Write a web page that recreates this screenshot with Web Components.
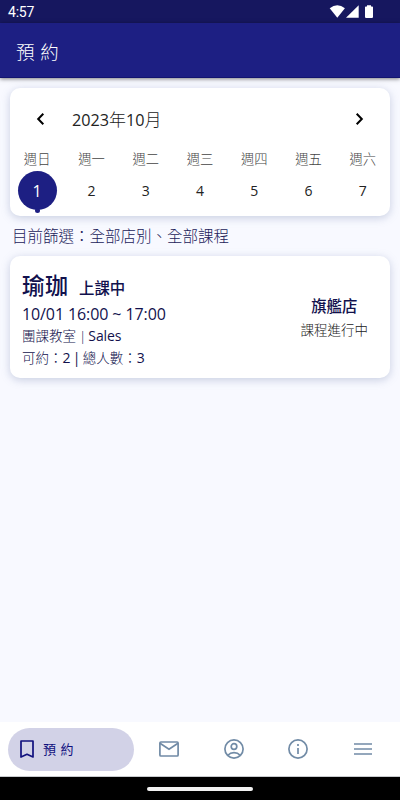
<!DOCTYPE html>
<html lang="zh-Hant">
<head>
<meta charset="utf-8">
<title>預約</title>
<style>
body{margin:0;font-family:"Open Sans","Noto Sans CJK TC",sans-serif;background:#f8f9ff}
</style>
</head>
<body>
<booking-app></booking-app>
<script>
const define=(name,html)=>customElements.define(name,class extends HTMLElement{
  constructor(){super();this.attachShadow({mode:'open'}).innerHTML=html;}
});

define('status-bar',`<style>
:host{display:flex;height:23px;background:#16175f;color:#fff;align-items:center;justify-content:space-between;padding:1px 26px 0 8px;box-sizing:border-box;font:400 14px/22px Roboto,sans-serif;letter-spacing:-.2px}
svg{display:block}
</style><span>4:57</span>
<svg width="46" height="14" viewBox="328 5 46 14" fill="#fff"><path d="M329.7 8.2Q337.3 2.300 344.900 8.2L337.300 17.800Z"/><path d="M358.700 5.200V17.800H346Z"/><path d="M367 5.200h4v1.200h1.200q.8 0 .8.8v9.900q0 .8-.8.8h-6.400q-.8 0-.8-.8V7.200q0-.8.8-.8H367z"/></svg>`);

define('title-bar',`<style>
:host{display:flex;height:55px;box-sizing:border-box;align-items:center;padding:1px 16px 0;background:#1d1f83;border-bottom:1px solid #12146f;color:#fff;font-size:18.500px;font-weight:300;word-spacing:.9px;position:relative;z-index:1;box-shadow:0 1px 4px rgba(0,0,0,.5)}
</style><slot></slot>`);

define('soft-card',`<style>
:host{display:block;background:#fff;border-radius:10px;box-sizing:border-box;box-shadow:0 2px 8px rgba(120,138,175,.38)}
</style><slot></slot>`);

customElements.define('day-cell',class extends HTMLElement{
  constructor(){super();this.attachShadow({mode:'open'}).innerHTML=`<style>
:host{display:flex;flex-direction:column;align-items:center;color:#222;font-size:14px;font-weight:400}
.w{font-size:13.300px;line-height:20px;font-weight:300;color:#444;white-space:nowrap}
.d{width:39px;height:39px;margin-top:2px;display:flex;align-items:center;justify-content:center;border-radius:50%;position:relative}
:host([selected]) .d{background:#1d1f83;color:#fff;font-size:16px}
:host([selected]) .d::after{content:"";position:absolute;left:17px;top:37px;width:5px;height:5px;border-radius:50%;background:#1d1f83}
</style><span class="w">${this.getAttribute('week')}</span><span class="d">${this.getAttribute('day')}</span>`;}
});

define('week-calendar',`<style>
:host{display:block}
.m{display:flex;align-items:center;height:61px;padding:0 19px;font-size:16.200px;font-weight:400;color:#222}
.m span{flex:1;margin-left:19px;padding-bottom:1px}
.m i{font-style:normal;font-weight:300;font-size:17px}
svg{display:block}
.g{display:grid;grid-template-columns:repeat(7,1fr)}
</style>
<div class="m"><svg width="24" height="24" fill="none" stroke="#000" stroke-width="2"><path d="M14.300 6.800 9.200 12l5.100 5.200"/></svg><span>2023<i>年</i>10<i>月</i></span><svg width="24" height="24" fill="none" stroke="#000" stroke-width="2"><path d="M9.700 6.800 14.800 12l-5.100 5.200"/></svg></div>
<div class="g">${['日','一','二','三','四','五','六'].map((c,i)=>`<day-cell week="週${c}" day="${i+1}"${i?'':' selected'}></day-cell>`).join('')}</div>`);

define('filter-line',`<style>
:host{display:block;font-size:15.500px;font-weight:300;line-height:19px;color:#22225a;white-space:nowrap}
</style><slot></slot>`);

define('class-item',`<style>
:host{display:flex;color:#11114d;height:100%;box-sizing:border-box;padding:12px 22px 0 12px;justify-content:space-between;white-space:nowrap}
.l div{height:21.500px;line-height:21px;font-size:13.500px;font-weight:300;word-spacing:-.5px}
.l .h{height:34px;line-height:34px;display:flex;align-items:baseline;gap:11px;font-size:23px;font-weight:500}
.l .t{height:23px;line-height:24px;font-size:16px;font-weight:400;letter-spacing:-.1px;word-spacing:0}
small{font-size:15.400px}
b{font-size:14px;font-weight:400;letter-spacing:-.1px}
.l div:last-child{word-spacing:-1.200px}
.l .s{margin-left:-1px}
.r{text-align:center;padding-top:28px}
.r div{font-size:15.400px;line-height:22px;font-weight:500}
.r div+div{font-size:13.500px;line-height:24px;font-weight:300;color:#222}
</style>
<div class="l"><div class="h"><span>瑜珈</span><small>上課中</small></div><div class="t">10/01 16:00 ~ 17:00</div><div>團課教室 | <b class="s">Sales</b></div><div>可約：<b>2 |</b> 總人數：<b>3</b></div></div>
<div class="r"><div>旗艦店</div><div>課程進行中</div></div>`);

define('tab-bar',`<style>
:host{display:flex;height:55px;box-sizing:border-box;background:#fff;border-bottom:1px solid #c8cbce;padding:0 5px 0 8px;align-items:center;color:#718ba6}
.a{width:126px;height:43px;border-radius:22px;background:#d2d2e7;color:#10107e;display:flex;align-items:center;padding-left:7px;box-sizing:border-box;gap:4px;font-size:13px;word-spacing:1px}
.a span{padding-bottom:1px}
.i{flex:1;display:grid;place-items:center}
.a + .i{margin-left:3px}
svg{display:block;width:24px;height:24px;fill:none;stroke:currentColor;stroke-width:1.700}
</style>
<div class="a"><svg viewBox="0 0 24 24"><path d="M6 4h12v16l-6-2.700L6 20z" stroke-linejoin="round"/></svg><span>預 約</span></div>
<div class="i"><svg viewBox="0 0 24 24"><rect x="2.900" y="5" width="18.200" height="14" rx="1"/><path d="m3 6.200 9 6 9-6"/></svg></div>
<div class="i"><svg viewBox="0 0 24 24"><circle cx="12" cy="12" r="9.100"/><circle cx="12" cy="9.500" r="2.800"/><path d="M5.900 18.200C9 14.800 15 14.800 18.100 18.200"/></svg></div>
<div class="i"><svg viewBox="0 0 24 24"><circle cx="12" cy="12" r="9.100"/><path d="M12 11v6M12 7v2"/></svg></div>
<div class="i"><svg viewBox="0 0 24 24"><path d="M3 7h18M3 12h18M3 17h18"/></svg></div>`);

define('gesture-bar',`<style>
:host{display:flex;height:23px;background:#000;justify-content:center;align-items:center}
i{width:106px;height:4px;border-radius:2px;background:#f2f2f2}
</style><i></i>`);

define('booking-app',`<style>
:host{display:flex;flex-direction:column;height:800px;width:400px;overflow:hidden;background:#f8f9ff}
main{flex:1;padding:10px 10px 0}
.cal{height:128px}
filter-line{margin:11px 2px 10px}
.cls{height:122px}
</style>
<status-bar></status-bar><title-bar>預 約</title-bar>
<main><soft-card class="cal"><week-calendar></week-calendar></soft-card>
<filter-line>目前篩選：全部店別、全部課程</filter-line>
<soft-card class="cls"><class-item></class-item></soft-card></main>
<tab-bar></tab-bar><gesture-bar></gesture-bar>`);
</script>
</body>
</html>
